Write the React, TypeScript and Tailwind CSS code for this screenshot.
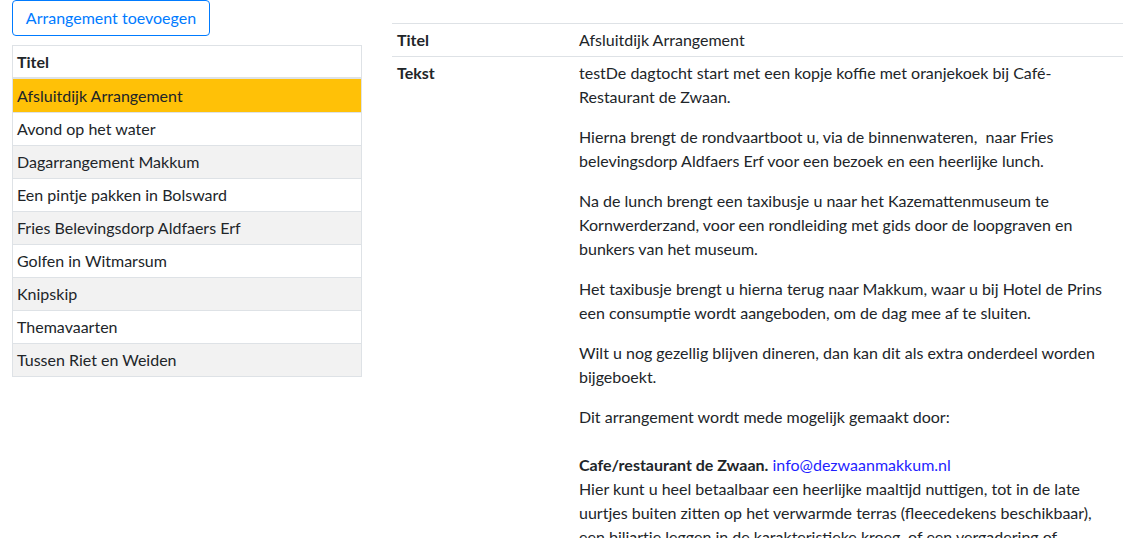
const items = [
  "Afsluitdijk Arrangement",
  "Avond op het water",
  "Dagarrangement Makkum",
  "Een pintje pakken in Bolsward",
  "Fries Belevingsdorp Aldfaers Erf",
  "Golfen in Witmarsum",
  "Knipskip",
  "Themavaarten",
  "Tussen Riet en Weiden",
];

function List() {
  return (
    <div className="w-[350px] border border-[#dee2e6]">
      <div className="h-[33px] border-b-2 border-[#dee2e6] px-[4px] py-[4px] font-bold leading-6">
        Titel
      </div>
      {items.map((t, i) => (
        <div
          key={t}
          className={
            "h-[33px] px-[4px] leading-6 " +
            (i === 0
              ? "bg-[#ffc107] pt-[5px]"
              : i % 2 === 0
                ? "border-t border-[#dee2e6] bg-[#f2f2f2] py-[4px]"
                : "border-t border-[#dee2e6] bg-white py-[4px]")
          }
        >
          {t}
        </div>
      ))}
    </div>
  );
}

export default function App() {
  return (
    <div
      className="flex h-[538px] overflow-hidden bg-white text-[16px] text-[#212529]"
      style={{ fontFamily: "Lato, 'Segoe UI', sans-serif" }}
    >
      <div className="ml-[12px] flex w-[350px] flex-col">
        <button className="h-[36px] w-[198px] rounded border border-[#007bff] leading-6 text-[#007bff]">
          Arrangement toevoegen
        </button>
        <div className="mt-[9px]">
          <List />
        </div>
      </div>
      <div className="ml-[30px] mt-[23px] w-[731px]">
        <div className="flex border-t border-[#dee2e6]">
          <div className="w-[182px] shrink-0 px-[5px] py-[4px] font-bold leading-6">Titel</div>
          <div className="flex-1 px-[5px] py-[4px] leading-6">Afsluitdijk Arrangement</div>
        </div>
        <div className="flex border-t border-[#dee2e6]">
          <div className="w-[182px] shrink-0 px-[5px] py-[4px] font-bold leading-6">Tekst</div>
          <div className="w-[549px] px-[5px] py-[4px] leading-6">
            <p className="mb-4">
              testDe dagtocht start met een kopje koffie met oranjekoek bij Café-
              <br />
              Restaurant de Zwaan.
            </p>
            <p className="mb-4">
              Hierna brengt de rondvaartboot u, via de binnenwateren,&nbsp; naar Fries
              <br />
              belevingsdorp Aldfaers Erf voor een bezoek en een heerlijke lunch.
            </p>
            <p className="mb-4">
              Na de lunch brengt een taxibusje u naar het Kazemattenmuseum te
              <br />
              Kornwerderzand, voor een rondleiding met gids door de loopgraven en
              <br />
              bunkers van het museum.
            </p>
            <p className="mb-4">
              Het taxibusje brengt u hierna terug naar Makkum, waar u bij Hotel de Prins
              <br />
              een consumptie wordt aangeboden, om de dag mee af te sluiten.
            </p>
            <p className="mb-4">
              Wilt u nog gezellig blijven dineren, dan kan dit als extra onderdeel worden
              <br />
              bijgeboekt.
            </p>
            <p className="mb-4">
              Dit arrangement wordt mede mogelijk gemaakt door:
              <br />
              <br />
              <strong>Cafe/restaurant de Zwaan.</strong>{" "}
              <a className="text-[#1f1fff]">info@dezwaanmakkum.nl</a>
              <br />
              Hier kunt u heel betaalbaar een heerlijke maaltijd nuttigen, tot in de late
              <br />
              uurtjes buiten zitten op het verwarmde terras (fleecedekens beschikbaar),
              <br />
              een biljartje leggen in de karakteristieke kroeg, of een vergadering of
            </p>
          </div>
        </div>
      </div>
    </div>
  );
}
